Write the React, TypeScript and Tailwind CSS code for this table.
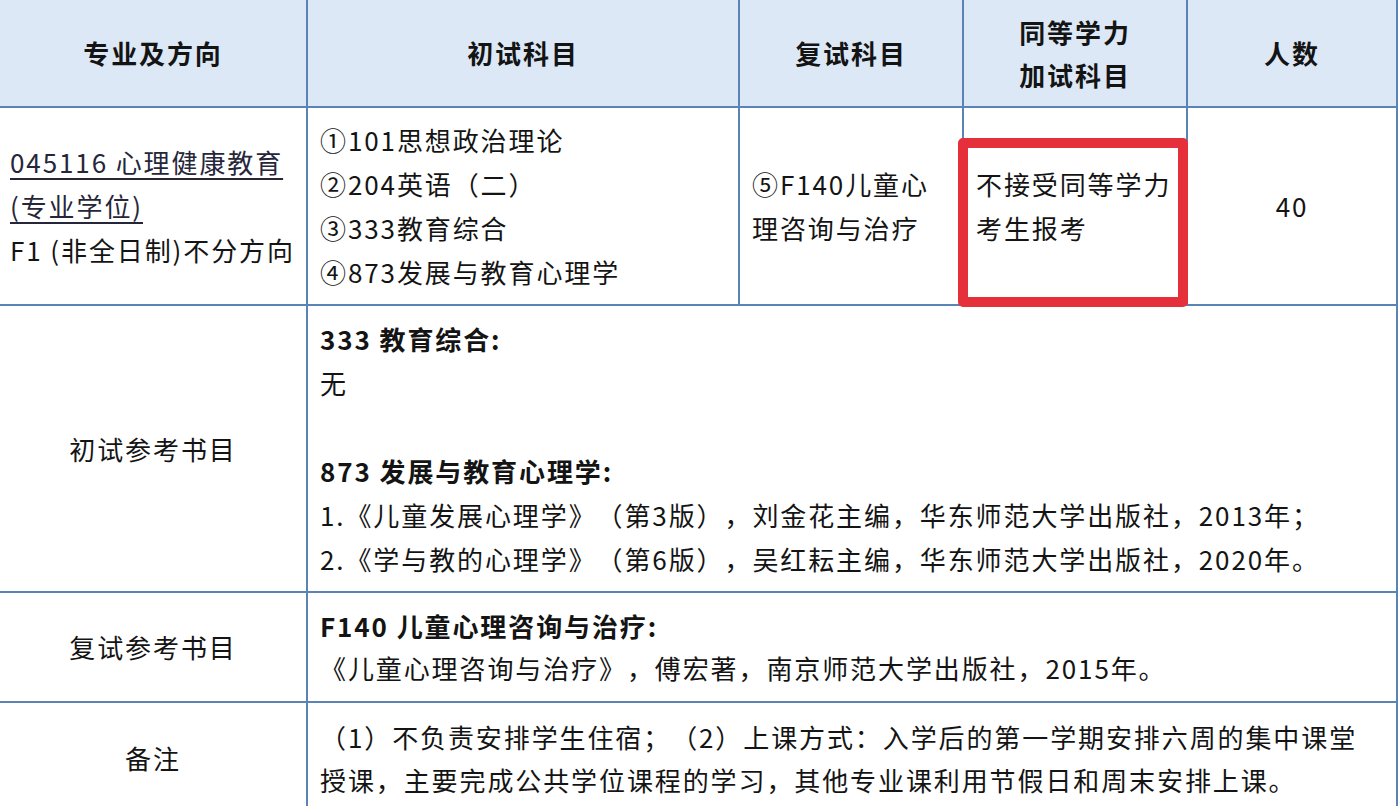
const line = "border-[#5a84b6]";

const Cell = ({ className = "", children }: { className?: string; children?: React.ReactNode }) => (
  <div className={`relative border-r-2 border-b-2 ${line} flex items-center ${className}`}>{children}</div>
);

const App = () => {
  return (
    <div
      className="h-[806px] w-[1398px] overflow-hidden bg-white text-[#141414] text-[26px] leading-[44px] tracking-[1.9px] [text-spacing-trim:space-all]"
      style={{ fontFamily: '"Noto Sans CJK SC", "Noto Sans", sans-serif' }}
    >
      <div className="grid grid-cols-[308px_432px_224px_224px_210px] grid-rows-[108px_198px_287px_110px_111px]">
        {/* Header */}
        <Cell className="justify-center bg-[#dce8f6] font-bold">专业及方向</Cell>
        <Cell className="justify-center bg-[#dce8f6] font-bold">初试科目</Cell>
        <Cell className="justify-center bg-[#dce8f6] font-bold">复试科目</Cell>
        <Cell className="justify-center bg-[#dce8f6] font-bold text-center leading-[43px]">
          <div>
            同等学力
            <br />
            加试科目
          </div>
        </Cell>
        <Cell className="justify-center bg-[#dce8f6] font-bold">人数</Cell>

        {/* Programme row */}
        <Cell className="pl-[10px]">
          <div className="whitespace-nowrap">
            <div className="text-[#26263a] underline underline-offset-[5px] decoration-[1.5px]">045116 心理健康教育</div>
            <div className="text-[#26263a] underline underline-offset-[5px] decoration-[1.5px]">(专业学位)</div>
            <div>F1 (非全日制)不分方向</div>
          </div>
        </Cell>
        <Cell className="pl-[12px]">
          <div className="whitespace-nowrap">
            <div>①101思想政治理论</div>
            <div>②204英语（二）</div>
            <div>③333教育综合</div>
            <div>④873发展与教育心理学</div>
          </div>
        </Cell>
        <Cell className="pl-[12px]">
          <div className="whitespace-nowrap">
            <div>⑤F140儿童心</div>
            <div>理咨询与治疗</div>
          </div>
        </Cell>
        <Cell className="pl-[12px]">
          <div className="whitespace-nowrap">
            <div>不接受同等学力</div>
            <div>考生报考</div>
          </div>
          <div className="absolute left-[-6px] top-[30px] h-[169px] w-[230px] rounded-[5px] border-[10px] border-[#e5303c]" />
        </Cell>
        <Cell className="justify-center">40</Cell>

        {/* Initial exam books */}
        <Cell className="justify-center">初试参考书目</Cell>
        <Cell className="col-span-4 pl-[12px]">
          <div className="whitespace-nowrap">
            <div className="font-bold">333 教育综合:</div>
            <div>无</div>
            <div className="h-[44px]" />
            <div className="font-bold">873 发展与教育心理学:</div>
            <div>1.《儿童发展心理学》（第3版），刘金花主编，华东师范大学出版社，2013年；</div>
            <div>2.《学与教的心理学》（第6版），吴红耘主编，华东师范大学出版社，2020年。</div>
          </div>
        </Cell>

        {/* Re-exam books */}
        <Cell className="justify-center">复试参考书目</Cell>
        <Cell className="col-span-4 pl-[12px] leading-[42px]">
          <div className="whitespace-nowrap">
            <div className="font-bold">F140 儿童心理咨询与治疗:</div>
            <div>《儿童心理咨询与治疗》，傅宏著，南京师范大学出版社，2015年。</div>
          </div>
        </Cell>

        {/* Remarks */}
        <Cell className="justify-center">备注</Cell>
        <Cell className="col-span-4 pl-[12px] leading-[43px]">
          <div className="whitespace-nowrap">
            <div>（1）不负责安排学生住宿；（2）上课方式：入学后的第一学期安排六周的集中课堂</div>
            <div>授课，主要完成公共学位课程的学习，其他专业课利用节假日和周末安排上课。</div>
          </div>
        </Cell>
      </div>
    </div>
  );
};

export default App;
